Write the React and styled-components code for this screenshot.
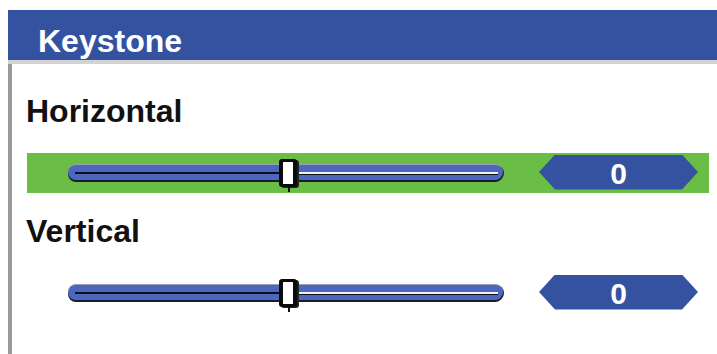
import React from "react";
import styled, { createGlobalStyle } from "styled-components";

const Global = createGlobalStyle`
  html, body { margin: 0; padding: 0; background: #fff; }
  body { font-family: "Liberation Sans", Arial, sans-serif; }
  * { box-sizing: border-box; }
`;

const Screen = styled.div`
  width: 717px;
  height: 354px;
  overflow: hidden;
  background: #fff;
  padding: 10px 0 0 8px;
  display: flex;
  flex-direction: column;
`;

const TitleBar = styled.div`
  height: 54px;
  padding: 12px 0 0 30px;
  background: #3452a0;
  border-bottom: 4px solid;
  border-image: linear-gradient(#8c8c8c, #d4d4d4) 1;
  color: #fff;
  font-size: 32px;
  font-weight: bold;
  line-height: 38px;
`;

const Body = styled.div`
  flex: 1;
  border-left: 4px solid;
  border-image: linear-gradient(90deg, #9a9a9a 0 75%, #dcdcdc 75%) 1;
  padding: 29px 8px 0 15px;
  display: flex;
  flex-direction: column;
`;

const Section = styled.div`
  display: flex;
  flex-direction: column;
  margin-bottom: 20px;
`;

const Label = styled.div`
  height: 36px;
  line-height: 36px;
  font-size: 32px;
  font-weight: bold;
  color: #111;
  margin: 0 0 24px -1px;
`;

const Row = styled.div`
  height: 40px;
  display: flex;
  align-items: center;
  padding: 0 11px 2px 41px;
  background: ${(p) => (p.$active ? "#6bbe45" : "transparent")};
`;

const Track = styled.div`
  position: relative;
  width: 435px;
  height: 16px;
  border-radius: 8px;
  background: #4b67bf;
  border-top: 1px solid #9aa0b0;
  box-shadow: 0 2px 0 #1c1c2a, 1px 1px 0 #1c1c2a;
  display: flex;
  align-items: center;
  padding: 0 5px 0 7px;
`;

const GrooveLeft = styled.div`
  height: 2px;
  background: #0d0d14;
`;

const GrooveRight = styled.div`
  flex: 1;
  height: 3px;
  background: #f4f4f8;
  border-bottom: 1.5px solid #0d0d14;
  margin-top: 1px;
`;

const Thumb = styled.div`
  position: absolute;
  top: -6px;
  width: 18px;
  height: 28px;
  transform: translateX(-50%);
  background: #fff;
  border: solid #0a0a0a;
  border-width: 3px 4px 3px 4px;
  border-radius: 3px;
  box-shadow: 2px 1px 0 #222;
  &::after {
    content: "";
    position: absolute;
    left: 50%;
    top: calc(100% + 3px);
    width: 2px;
    height: 5px;
    background: #111;
  }
`;

const ValueBox = styled.div`
  margin-left: auto;
  width: 159px;
  height: 35px;
  padding-top: 3px;
  background: #3452a0;
  clip-path: polygon(16px 0, 143px 0, 100% 50%, 143px 100%, 16px 100%, 0 50%);
  color: #fff;
  font-size: 30px;
  font-weight: bold;
  line-height: 32px;
  text-align: center;
`;

function Slider({ label, value, min, max, active }) {
  const pct = ((value - min) / (max - min)) * 100;
  return (
    <Section>
      <Label>{label}</Label>
      <Row $active={active}>
        <Track>
          <GrooveLeft style={{ width: `calc(${pct}% - 4px)` }} />
          <GrooveRight />
          <Thumb style={{ left: `calc(${pct}% + 2px)` }} />
        </Track>
        <ValueBox>{value}</ValueBox>
      </Row>
    </Section>
  );
}

export default function App() {
  return (
    <>
      <Global />
      <Screen>
        <TitleBar>Keystone</TitleBar>
        <Body>
          <Slider label="Horizontal" value={0} min={-100} max={100} active />
          <Slider label="Vertical" value={0} min={-100} max={100} />
        </Body>
      </Screen>
    </>
  );
}
